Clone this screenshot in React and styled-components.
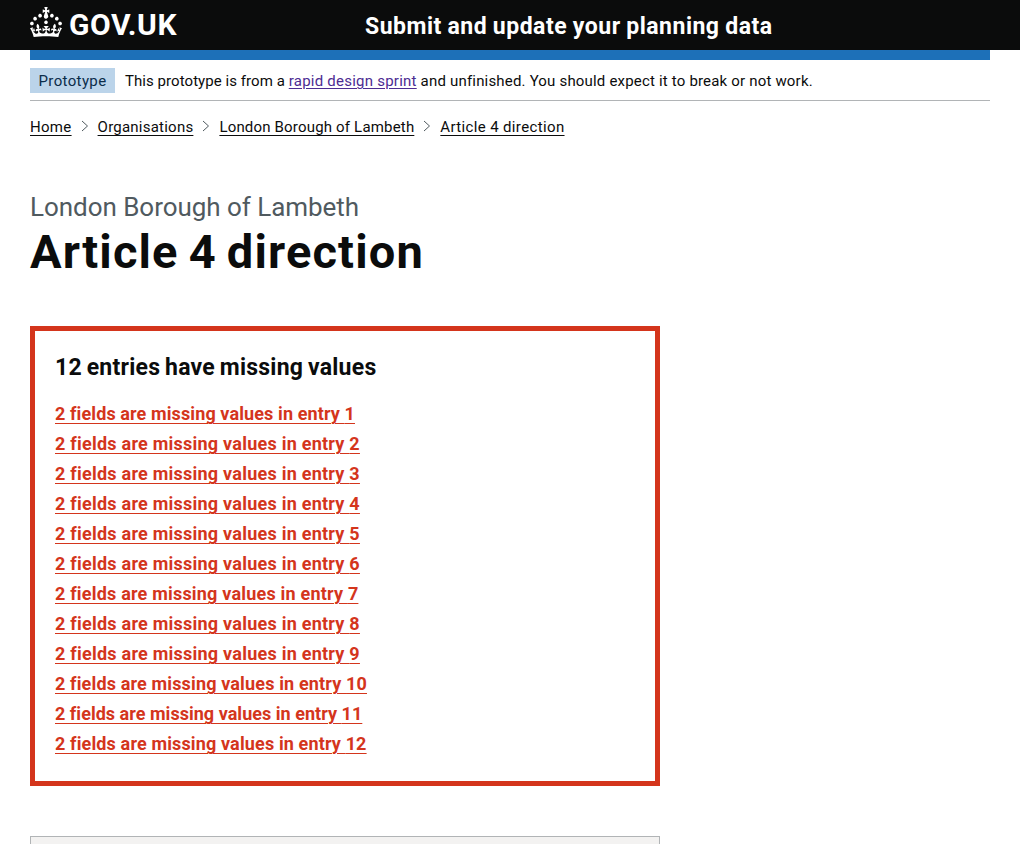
import React from "react";
import styled, { createGlobalStyle } from "styled-components";

const GlobalStyle = createGlobalStyle`
  *, *::before, *::after { box-sizing: border-box; }
  body {
    margin: 0;
    background: #fff;
    color: #0b0c0c;
    font-family: Roboto, "Liberation Sans", sans-serif;
    -webkit-font-smoothing: antialiased;
  }
`;

const Header = styled.header`
  height: 50px;
  background: #0b0c0c;
  color: #fff;
`;

const Container = styled.div`
  width: 960px;
  margin: 0 auto;
`;

const HeaderInner = styled(Container)`
  display: flex;
  height: 50px;
`;

const LogoLink = styled.a`
  display: flex;
  align-items: flex-start;
  gap: 7px;
  width: 335px;
  padding-top: 7px;
  color: inherit;
  text-decoration: none;
`;

const Wordmark = styled.span`
  font-size: 30px;
  font-weight: 700;
  line-height: 35px;
  letter-spacing: 0.55px;
`;

const ServiceName = styled.a`
  padding-top: 12px;
  color: inherit;
  text-decoration: none;
  font-size: 23px;
  font-weight: 700;
  line-height: 30px;
  letter-spacing: 0.5px;
  word-spacing: -0.5px;
  white-space: nowrap;
`;

const BlueBar = styled.div`
  height: 10px;
  background: #1d70b8;
`;

const PhaseBanner = styled.div`
  display: flex;
  align-items: center;
  gap: 10px;
  height: 41px;
  padding: 8px 0 7px;
  border-bottom: 1px solid #b1b4b6;
  font-size: 15px;
  line-height: 25px;
`;

const Tag = styled.strong`
  width: 85px;
  height: 25px;
  background: #bbd4ea;
  color: #0c2d4a;
  font-weight: 400;
  line-height: 27px;
  text-align: center;
  letter-spacing: 0.37px;
`;

const PhaseText = styled.p`
  margin: 0;
  padding-top: 2px;
  white-space: nowrap;
  letter-spacing: 0.06px;
`;

const PhaseNote = styled.span`
  letter-spacing: 0.185px;
`;

const VisitedLink = styled.a`
  color: #4c2c92;
  letter-spacing: 0.235px;
  text-decoration: underline;
  text-decoration-thickness: 1px;
  text-underline-offset: 2px;
`;

const Breadcrumbs = styled.ol`
  display: flex;
  align-items: center;
  height: 20px;
  margin: 16px 0 0;
  padding: 0;
  list-style: none;
  font-size: 15px;
  line-height: 20px;
`;

const Crumb = styled.li`
  display: flex;
  align-items: center;
  white-space: nowrap;
`;

const CrumbLink = styled.a`
  color: #0b0c0c;
  letter-spacing: ${(p) => p.$spacing}px;
  text-decoration: underline;
  text-decoration-thickness: 1px;
  text-underline-offset: 3px;
`;

const Chevron = styled.svg`
  width: 8px;
  height: 12px;
  margin: 0 9px 2px;
  fill: none;
  stroke: #505a5f;
`;

const Main = styled.main`
  padding-top: 54px;
`;

const Caption = styled.span`
  display: block;
  color: #505a5f;
  font-size: 26px;
  line-height: 32px;
  letter-spacing: -0.04px;
`;

const Title = styled.h1`
  margin: 4px 0 49px;
  font-size: 47px;
  font-weight: 700;
  line-height: 50px;
  letter-spacing: 1.15px;
  word-spacing: -2.8px;
`;

const Column = styled.div`
  width: 630px;
`;

const ErrorSummary = styled.section`
  height: 460px;
  padding: 21px 20px 20px;
  border: 5px solid #d4351c;
`;

const ErrorTitle = styled.h2`
  margin: 0 0 17px;
  font-size: 23px;
  font-weight: 700;
  line-height: 32px;
  letter-spacing: 0.25px;
  word-spacing: -1.2px;
`;

const ErrorList = styled.ul`
  display: flex;
  flex-direction: column;
  gap: 5px;
  margin: 0;
  padding: 0;
  list-style: none;
`;

const ErrorItem = styled.li`
  font-size: 18px;
  font-weight: 700;
  line-height: 25px;
  letter-spacing: ${(p) => p.$spacing}px;
`;

const ErrorLink = styled.a`
  color: #d4351c;
  text-decoration: underline;
  text-decoration-thickness: 1px;
  text-underline-offset: 3px;
`;

const SummaryCard = styled.section`
  height: 8px;
  margin-top: 50px;
  border: 1px solid #b1b4b6;
  border-bottom: 0;
  background: #f3f2f1;
`;

const crumbs = [
  { label: "Home", spacing: 0.3 },
  { label: "Organisations", spacing: 0.23 },
  { label: "London Borough of Lambeth", spacing: 0.18 },
  { label: "Article 4 direction", spacing: 0.36 },
];

const entrySpacing = { 1: 0.11, 7: 0.2, 10: 0.15, 11: 0.03, 12: 0.14 };
const entries = Array.from({ length: 12 }, (_, i) => i + 1);

function Crown() {
  return (
    <svg width="32" height="30" viewBox="0 0 32 30" fill="currentColor" aria-hidden="true">
      <path d="M22.6 10.4c-1 .4-2-.1-2.4-1-.4-.9.1-2 1-2.4.9-.4 2 .1 2.4 1s-.1 2-1 2.4m-5.9 6.7c-.9.4-2-.1-2.4-1-.4-.9.1-2 1-2.4.9-.4 2 .1 2.4 1s-.1 2-1 2.4m10.8-3.7c-1 .4-2-.1-2.4-1-.4-.9.1-2 1-2.4.9-.4 2 .1 2.4 1s0 2-1 2.4m3.3 4.8c-1 .4-2-.1-2.4-1-.4-.9.1-2 1-2.4.9-.4 2 .1 2.4 1s-.1 2-1 2.4M17 4.7l2.3 1.2V2.5l-2.3.7-.2-.2.9-3h-3.4l.9 3-.2.2c-.1.1-2.3-.7-2.3-.7v3.4L15 4.7c.1.1.1.2.2.2l-1.3 4c-.1.2-.1.4-.1.6 0 1.1.8 2 1.9 2.2h.7c1-.2 1.9-1.1 1.9-2.1 0-.2 0-.4-.1-.6l-1.3-4c-.1-.2 0-.2.1-.3m-7.6 5.7c.9.4 2-.1 2.4-1 .4-.9-.1-2-1-2.4-.9-.4-2 .1-2.4 1s0 2 1 2.4m-5 3c.9.4 2-.1 2.4-1 .4-.9-.1-2-1-2.4-.9-.4-2 .1-2.4 1s.1 2 1 2.4m-3.2 4.8c.9.4 2-.1 2.4-1 .4-.9-.1-2-1-2.4-.9-.4-2 .1-2.4 1s0 2 1 2.4m14.8 11c4.4 0 8.6.3 12.3.8 1.1-4.5 2.4-7 3.7-8.8l-2.5-.9c.2 1.3.3 1.9 0 2.7-.4-.4-.8-1.1-1.1-2.3l-1.2 4c.7-.5 1.3-.8 2-.9-1.1 2.5-2.6 3.1-3.5 3-1.1-.2-1.7-1.2-1.5-2.1.3-1.2 1.5-1.5 2.1-.1 1.1-2.3-.8-3-2-2.3 1.9-1.9 2.1-3.5.6-5.6-2.1 1.6-2.1 3.2-1.2 5.5-1.2-1.4-3.2-.6-2.5 1.6.9-1.4 2.1-.5 1.9.8-.2 1.1-1.7 2.1-3.5 1.9-2.7-.2-2.9-2.1-2.9-3.6.7-.1 1.9.5 2.9 1.9l.4-4.3c-1.1 1.1-2.1 1.4-3.2 1.4.4-1.2 2.1-3 2.1-3h-5.4s1.7 1.9 2.1 3c-1.1 0-2.1-.2-3.2-1.4l.4 4.3c1-1.4 2.2-2 2.9-1.9-.1 1.5-.2 3.4-2.9 3.6-1.9.2-3.4-.8-3.5-1.9-.2-1.3 1-2.2 1.9-.8.7-2.3-1.2-3-2.5-1.6.9-2.2.9-3.9-1.2-5.5-1.5 2-1.3 3.7.6 5.6-1.2-.7-3.1 0-2 2.3.6-1.4 1.8-1.1 2.1.1.2.9-.3 1.9-1.5 2.1-.9.2-2.4-.5-3.5-3 .6 0 1.2.3 2 .9l-1.2-4c-.3 1.1-.7 1.9-1.1 2.3-.3-.8-.2-1.4 0-2.7l-2.9.9C1.3 23 2.6 25.5 3.7 30c3.7-.5 7.9-.8 12.3-.8" />
    </svg>
  );
}

export default function App() {
  return (
    <>
      <GlobalStyle />
      <Header>
        <HeaderInner>
          <LogoLink>
            <Crown />
            <Wordmark>GOV.UK</Wordmark>
          </LogoLink>
          <ServiceName>Submit and update your planning data</ServiceName>
        </HeaderInner>
      </Header>
      <Container>
        <BlueBar />
        <PhaseBanner>
          <Tag>Prototype</Tag>
          <PhaseText>
            This prototype is from a <VisitedLink>rapid design sprint</VisitedLink>
            <PhaseNote> and unfinished. You should expect it to break or not work.</PhaseNote>
          </PhaseText>
        </PhaseBanner>
        <Breadcrumbs>
          {crumbs.map((crumb, i) => (
            <Crumb key={crumb.label}>
              {i > 0 && (
                <Chevron viewBox="0 0 8 12">
                  <path d="M1 1l5.5 5L1 11" />
                </Chevron>
              )}
              <CrumbLink $spacing={crumb.spacing}>{crumb.label}</CrumbLink>
            </Crumb>
          ))}
        </Breadcrumbs>
        <Main>
          <Caption>London Borough of Lambeth</Caption>
          <Title>Article 4 direction</Title>
          <Column>
            <ErrorSummary>
              <ErrorTitle>12 entries have missing values</ErrorTitle>
              <ErrorList>
                {entries.map((n) => (
                  <ErrorItem key={n} $spacing={entrySpacing[n] ?? 0.24}>
                    <ErrorLink>2 fields are missing values in entry {n}</ErrorLink>
                  </ErrorItem>
                ))}
              </ErrorList>
            </ErrorSummary>
            <SummaryCard />
          </Column>
        </Main>
      </Container>
    </>
  );
}
